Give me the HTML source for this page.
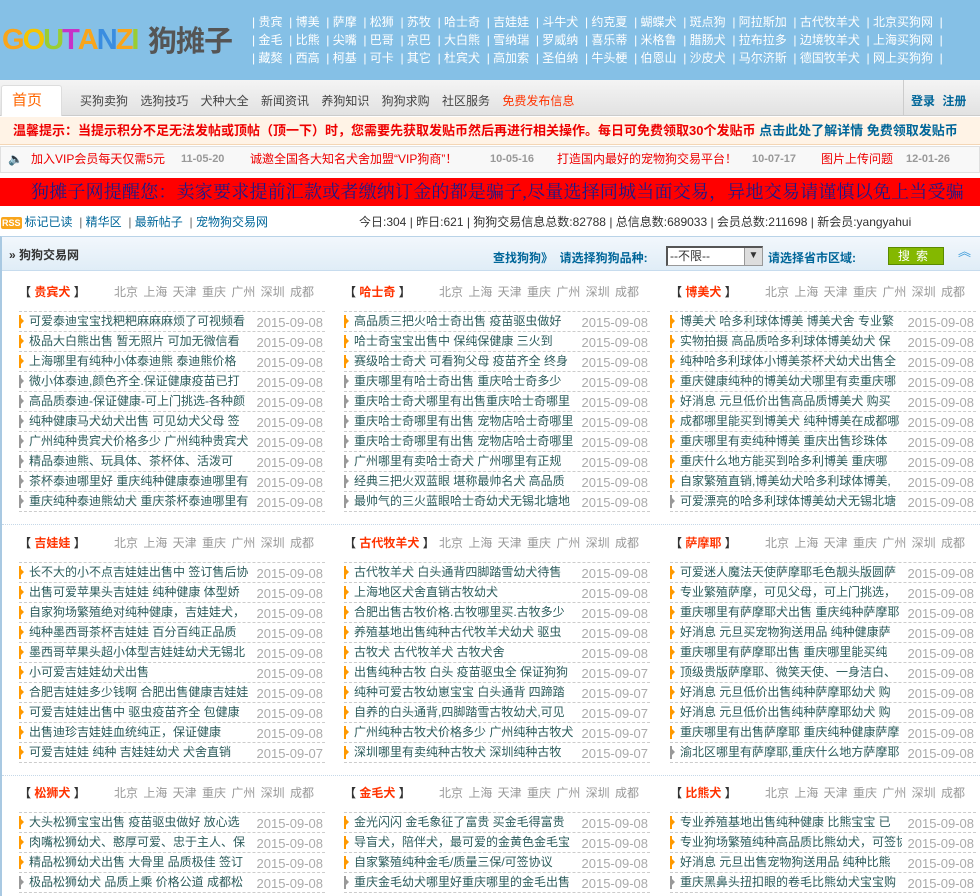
<!DOCTYPE html>
<html><head><meta charset="utf-8">
<style>
*{margin:0;padding:0;box-sizing:border-box}
body{width:980px;height:891px;overflow:hidden;background:#fff;font-family:"Liberation Sans","Noto Sans CJK SC",sans-serif;font-size:12px;color:#333;position:relative}
.abs{position:absolute}
#hd{left:0;top:0;width:980px;height:80px;background:#85c0e6}
.logo{left:2px;top:24px;font-family:"Liberation Sans",sans-serif;font-weight:bold;font-size:29px;letter-spacing:-2px;line-height:32px}
.logo span{display:inline-block}
.logocn{left:148px;top:22px;font-size:29px;color:#555;line-height:34px;font-family:"Noto Sans CJK SC",sans-serif;font-weight:bold;letter-spacing:-1px}
.tl{font-size:12px;color:#fff;line-height:18px;white-space:nowrap}
#nav{left:0;top:80px;width:980px;height:36px;background:linear-gradient(#f4f4f4,#e2e2e2);border-bottom:1px solid #ccc}
.home{left:1px;top:85px;width:61px;height:31px;background:#fff;border:1px solid #ddd;border-bottom:none;border-radius:3px 3px 0 0;color:#f60;font-size:15px;line-height:29px;padding-left:10px}
.nv{top:92px;font-size:12px;color:#444}
#tip{left:0;top:117px;width:980px;height:28px;background:#fff3e6;border-bottom:1px solid #f4d6b5;font-weight:bold;font-size:13px;line-height:28px;padding-left:13px;color:#e00;white-space:nowrap;overflow:hidden}
#ntc{left:0;top:146px;width:980px;height:27px;background:#f8f8f8;border:1px solid #e0e0e0;font-size:12px;line-height:25px;white-space:nowrap}
#ntc .r{color:#e00;position:absolute}
#ntc .d{color:#999;position:absolute;font-size:11px;font-weight:bold}
#warn{left:0;top:178px;width:980px;height:28px;background:#ff0000;color:#1a1a8a;font-family:"Liberation Serif","Noto Serif CJK SC",serif;font-size:18px;line-height:28px;padding-left:31px;white-space:nowrap;overflow:hidden;letter-spacing:0.2px}
#st{left:0;top:210px;width:980px;height:24px;font-size:12px;line-height:24px;white-space:nowrap}
#box{left:0;top:236px;width:980px;height:660px;border-left:2px solid #a9c9e2;border-top:1px solid #b9d3e8}
#bh{left:2px;top:237px;width:978px;height:34px;background:linear-gradient(#f2f7fc,#e0edf7);border-bottom:1px solid #c7dcee}
.col{position:absolute;width:306px}
.ttl{height:20px;line-height:20px;font-size:12px;position:relative;white-space:nowrap}
.ttl b{color:#333}
.ttl .n{color:#f30;font-weight:bold}
.ttl .c{position:absolute;left:95px;top:0;color:#999;word-spacing:2px}
ul{list-style:none;border-top:1px dashed #ccc;margin-top:9px}
li{height:20px;line-height:19px;border-bottom:1px dashed #ccc;position:relative;padding-left:10px;white-space:nowrap;overflow:hidden;color:#2d5d5d}
li:before{content:"";position:absolute;left:0;top:3px;width:2px;height:13px;background:#999}
li:after{content:"";position:absolute;left:2px;top:6px;border-left:3px solid #999;border-top:3px solid transparent;border-bottom:3px solid transparent}
li.o:before{background:#f90}li.o:after{border-left-color:#f90}
li i{font-style:normal;display:inline-block;width:222px;overflow:hidden;vertical-align:top}
li em{font-style:normal;position:absolute;right:2px;top:1px;color:#aaa;font-size:13px}
.sep{position:absolute;left:2px;width:978px;border-top:1px dotted #c5d8e8}
</style></head><body>
<div id="hd" class="abs"></div>
<div class="abs logo"><span style="color:#f9a51b">G</span><span style="color:#f5c400">O</span><span style="color:#9acd32">U</span><span style="color:#c832c8">T</span><span style="color:#f9a51b">A</span><span style="color:#3a8de0">N</span><span style="color:#f9a51b">Z</span><span style="color:#9acd32">I</span></div>
<div class="abs logocn">狗摊子</div>
<div class="abs tl" style="left:252px;top:13px">| 贵宾&nbsp; | 博美&nbsp; | 萨摩&nbsp; | 松狮&nbsp; | 苏牧&nbsp; | 哈士奇&nbsp; | 吉娃娃&nbsp; | 斗牛犬&nbsp; | 约克夏&nbsp; | 蝴蝶犬&nbsp; | 斑点狗&nbsp; | 阿拉斯加&nbsp; | 古代牧羊犬&nbsp; | 北京买狗网&nbsp; |</div>
<div class="abs tl" style="left:252px;top:31px">| 金毛&nbsp; | 比熊&nbsp; | 尖嘴&nbsp; | 巴哥&nbsp; | 京巴&nbsp; | 大白熊&nbsp; | 雪纳瑞&nbsp; | 罗威纳&nbsp; | 喜乐蒂&nbsp; | 米格鲁&nbsp; | 腊肠犬&nbsp; | 拉布拉多&nbsp; | 边境牧羊犬&nbsp; | 上海买狗网&nbsp; |</div>
<div class="abs tl" style="left:252px;top:49px">| 藏獒&nbsp; | 西高&nbsp; | 柯基&nbsp; | 可卡&nbsp; | 其它&nbsp; | 杜宾犬&nbsp; | 高加索&nbsp; | 圣伯纳&nbsp; | 牛头梗&nbsp; | 伯恩山&nbsp; | 沙皮犬&nbsp; | 马尔济斯&nbsp; | 德国牧羊犬&nbsp; | 网上买狗狗&nbsp; |</div>
<div id="nav" class="abs"></div>
<div class="abs home">首页</div>
<div class="abs nv" style="left:80px;word-spacing:9px">买狗卖狗 选狗技巧 犬种大全 新闻资讯 养狗知识 狗狗求购 社区服务 <span style="color:#f30">免费发布信息</span></div>
<div class="abs" style="left:903px;top:80px;width:1px;height:36px;background:#ccc"></div>
<div class="abs nv" style="left:911px;color:#069;font-weight:bold;word-spacing:4px">登录 注册</div>
<div id="tip" class="abs">温馨提示：当提示积分不足无法发帖或顶帖（顶一下）时，您需要先获取发贴币然后再进行相关操作。每日可免费领取30个发贴币 <span style="color:#069">点击此处了解详情 免费领取发贴币</span></div>
<div id="ntc" class="abs">
<span class="abs" style="left:7px;top:0;color:#6a3">🔈</span>
<span class="r" style="left:30px">加入VIP会员每天仅需5元</span><span class="d" style="left:180px">11-05-20</span>
<span class="r" style="left:249px">诚邀全国各大知名犬舍加盟“VIP狗商”！</span><span class="d" style="left:489px">10-05-16</span>
<span class="r" style="left:556px">打造国内最好的宠物狗交易平台！</span><span class="d" style="left:751px">10-07-17</span>
<span class="r" style="left:820px">图片上传问题</span><span class="d" style="left:905px">12-01-26</span>
</div>
<div id="warn" class="abs">狗摊子网提醒您：卖家要求提前汇款或者缴纳订金的都是骗子,尽量选择同城当面交易，异地交易请谨慎以免上当受骗</div>
<div id="st" class="abs"><span style="display:inline-block;background:#f9a51b;color:#fff;font-size:9px;font-weight:bold;line-height:12px;padding:0 1px;margin:0 3px 0 1px;border-radius:2px">RSS</span><span style="color:#069">标记已读 </span><span style="color:#666">&nbsp;|&nbsp;</span><span style="color:#069">精华区 </span><span style="color:#666">&nbsp;|&nbsp;</span><span style="color:#069">最新帖子 </span><span style="color:#666">&nbsp;|&nbsp;</span><span style="color:#069">宠物狗交易网</span>
<span class="abs" style="left:359px;top:0;color:#333">今日:304 | 昨日:621 | 狗狗交易信息总数:82788 | 总信息数:689033 | 会员总数:211698 | 新会员:yangyahui</span></div>
<div id="box" class="abs"></div>
<div id="bh" class="abs"></div>
<div class="abs" style="left:9px;top:246px;font-weight:bold;font-size:12px;color:#333">» 狗狗交易网</div>
<div class="abs" style="left:493px;top:249px;font-weight:bold;color:#069">查找狗狗》 &nbsp;请选择狗狗品种:</div>
<div class="abs" style="left:666px;top:246px;width:97px;height:20px;border:2px solid #555;border-right:1px solid #999;border-bottom:1px solid #999;background:#fff;font-size:12px;line-height:16px;padding-left:2px">--不限--<span class="abs" style="right:0;top:0;width:18px;height:17px;background:#ddd;border-left:1px solid #999;text-align:center;font-size:10px">▼</span></div>
<div class="abs" style="left:768px;top:249px;font-weight:bold;color:#069">请选择省市区域:</div>
<div class="abs" style="left:888px;top:247px;width:56px;height:18px;background:#84b800;border:1px solid #5a8a00;color:#fff;text-align:center;line-height:16px;letter-spacing:6px;font-size:12px">搜索</div>
<div class="abs" style="left:958px;top:241px;color:#3a9ad9;font-size:13px">︽</div>

<div class="sep" style="top:524px"></div>
<div class="sep" style="top:775px"></div>

<!-- block 1 -->
<div class="col" style="left:19px;top:282px">
<div class="ttl"><b>【</b> <span class="n">贵宾犬</span> <b>】</b><span class="c">北京 上海 天津 重庆 广州 深圳 成都</span></div>
<ul>
<li class="o"><i>可爱泰迪宝宝找粑粑麻麻麻烦了可视频看</i><em>2015-09-08</em></li>
<li class="o"><i>极品大白熊出售 暂无照片 可加无微信看</i><em>2015-09-08</em></li>
<li class="o"><i>上海哪里有纯种小体泰迪熊 泰迪熊价格</i><em>2015-09-08</em></li>
<li><i>微小体泰迪,颜色齐全.保证健康疫苗已打</i><em>2015-09-08</em></li>
<li><i>高品质泰迪-保证健康-可上门挑选-各种颜</i><em>2015-09-08</em></li>
<li><i>纯种健康马犬幼犬出售 可见幼犬父母 签</i><em>2015-09-08</em></li>
<li><i>广州纯种贵宾犬价格多少 广州纯种贵宾犬</i><em>2015-09-08</em></li>
<li><i>精品泰迪熊、玩具体、茶杯体、活泼可</i><em>2015-09-08</em></li>
<li><i>茶杯泰迪哪里好 重庆纯种健康泰迪哪里有</i><em>2015-09-08</em></li>
<li><i>重庆纯种泰迪熊幼犬 重庆茶杯泰迪哪里有</i><em>2015-09-08</em></li>
</ul></div>
<div class="col" style="left:344px;top:282px">
<div class="ttl"><b>【</b> <span class="n">哈士奇</span> <b>】</b><span class="c">北京 上海 天津 重庆 广州 深圳 成都</span></div>
<ul>
<li class="o"><i>高品质三把火哈士奇出售 疫苗驱虫做好</i><em>2015-09-08</em></li>
<li class="o"><i>哈士奇宝宝出售中 保纯保健康 三火到</i><em>2015-09-08</em></li>
<li class="o"><i>赛级哈士奇犬 可看狗父母 疫苗齐全 终身</i><em>2015-09-08</em></li>
<li><i>重庆哪里有哈士奇出售 重庆哈士奇多少</i><em>2015-09-08</em></li>
<li><i>重庆哈士奇犬哪里有出售重庆哈士奇哪里</i><em>2015-09-08</em></li>
<li><i>重庆哈士奇哪里有出售 宠物店哈士奇哪里</i><em>2015-09-08</em></li>
<li><i>重庆哈士奇哪里有出售 宠物店哈士奇哪里</i><em>2015-09-08</em></li>
<li><i>广州哪里有卖哈士奇犬 广州哪里有正规</i><em>2015-09-08</em></li>
<li><i>经典三把火双蓝眼 堪称最帅名犬 高品质</i><em>2015-09-08</em></li>
<li><i>最帅气的三火蓝眼哈士奇幼犬无锡北塘地</i><em>2015-09-08</em></li>
</ul></div>
<div class="col" style="left:670px;top:282px">
<div class="ttl"><b>【</b> <span class="n">博美犬</span> <b>】</b><span class="c">北京 上海 天津 重庆 广州 深圳 成都</span></div>
<ul>
<li class="o"><i>博美犬 哈多利球体博美 博美犬舍 专业繁</i><em>2015-09-08</em></li>
<li class="o"><i>实物拍摄 高品质哈多利球体博美幼犬 保</i><em>2015-09-08</em></li>
<li class="o"><i>纯种哈多利球体小博美茶杯犬幼犬出售全</i><em>2015-09-08</em></li>
<li class="o"><i>重庆健康纯种的博美幼犬哪里有卖重庆哪</i><em>2015-09-08</em></li>
<li class="o"><i>好消息 元旦低价出售高品质博美犬 购买</i><em>2015-09-08</em></li>
<li class="o"><i>成都哪里能买到博美犬 纯种博美在成都哪</i><em>2015-09-08</em></li>
<li class="o"><i>重庆哪里有卖纯种博美 重庆出售珍珠体</i><em>2015-09-08</em></li>
<li class="o"><i>重庆什么地方能买到哈多利博美 重庆哪</i><em>2015-09-08</em></li>
<li class="o"><i>自家繁殖直销,博美幼犬哈多利球体博美,</i><em>2015-09-08</em></li>
<li><i>可爱漂亮的哈多利球体博美幼犬无锡北塘</i><em>2015-09-08</em></li>
</ul></div>

<!-- block 2 -->
<div class="col" style="left:19px;top:533px">
<div class="ttl"><b>【</b> <span class="n">吉娃娃</span> <b>】</b><span class="c">北京 上海 天津 重庆 广州 深圳 成都</span></div>
<ul>
<li class="o"><i>长不大的小不点吉娃娃出售中 签订售后协</i><em>2015-09-08</em></li>
<li class="o"><i>出售可爱苹果头吉娃娃 纯种健康 体型娇</i><em>2015-09-08</em></li>
<li class="o"><i>自家狗场繁殖绝对纯种健康，吉娃娃犬，</i><em>2015-09-08</em></li>
<li class="o"><i>纯种墨西哥茶杯吉娃娃 百分百纯正品质</i><em>2015-09-08</em></li>
<li class="o"><i>墨西哥苹果头超小体型吉娃娃幼犬无锡北</i><em>2015-09-08</em></li>
<li class="o"><i>小可爱吉娃娃幼犬出售</i><em>2015-09-08</em></li>
<li class="o"><i>合肥吉娃娃多少钱啊 合肥出售健康吉娃娃</i><em>2015-09-08</em></li>
<li class="o"><i>可爱吉娃娃出售中 驱虫疫苗齐全 包健康</i><em>2015-09-08</em></li>
<li class="o"><i>出售迪珍吉娃娃血统纯正，保证健康</i><em>2015-09-08</em></li>
<li class="o"><i>可爱吉娃娃 纯种 吉娃娃幼犬 犬舍直销</i><em>2015-09-07</em></li>
</ul></div>
<div class="col" style="left:344px;top:533px">
<div class="ttl"><b>【</b> <span class="n">古代牧羊犬</span> <b>】</b><span class="c">北京 上海 天津 重庆 广州 深圳 成都</span></div>
<ul>
<li class="o"><i>古代牧羊犬 白头通背四脚踏雪幼犬待售</i><em>2015-09-08</em></li>
<li class="o"><i>上海地区犬舍直销古牧幼犬</i><em>2015-09-08</em></li>
<li class="o"><i>合肥出售古牧价格.古牧哪里买.古牧多少</i><em>2015-09-08</em></li>
<li class="o"><i>养殖基地出售纯种古代牧羊犬幼犬 驱虫</i><em>2015-09-08</em></li>
<li class="o"><i>古牧犬 古代牧羊犬 古牧犬舍</i><em>2015-09-08</em></li>
<li class="o"><i>出售纯种古牧 白头 疫苗驱虫全 保证狗狗</i><em>2015-09-07</em></li>
<li class="o"><i>纯种可爱古牧幼崽宝宝 白头通背 四蹄踏</i><em>2015-09-07</em></li>
<li class="o"><i>自养的白头通背,四脚踏雪古牧幼犬,可见</i><em>2015-09-07</em></li>
<li class="o"><i>广州纯种古牧犬价格多少 广州纯种古牧犬</i><em>2015-09-07</em></li>
<li class="o"><i>深圳哪里有卖纯种古牧犬 深圳纯种古牧</i><em>2015-09-07</em></li>
</ul></div>
<div class="col" style="left:670px;top:533px">
<div class="ttl"><b>【</b> <span class="n">萨摩耶</span> <b>】</b><span class="c">北京 上海 天津 重庆 广州 深圳 成都</span></div>
<ul>
<li class="o"><i>可爱迷人魔法天使萨摩耶毛色靓头版圆萨</i><em>2015-09-08</em></li>
<li class="o"><i>专业繁殖萨摩，可见父母，可上门挑选，</i><em>2015-09-08</em></li>
<li class="o"><i>重庆哪里有萨摩耶犬出售 重庆纯种萨摩耶</i><em>2015-09-08</em></li>
<li class="o"><i>好消息 元旦买宠物狗送用品 纯种健康萨</i><em>2015-09-08</em></li>
<li class="o"><i>重庆哪里有萨摩耶出售 重庆哪里能买纯</i><em>2015-09-08</em></li>
<li class="o"><i>顶级贵版萨摩耶、微笑天使、一身洁白、</i><em>2015-09-08</em></li>
<li class="o"><i>好消息 元旦低价出售纯种萨摩耶幼犬 购</i><em>2015-09-08</em></li>
<li class="o"><i>好消息 元旦低价出售纯种萨摩耶幼犬 购</i><em>2015-09-08</em></li>
<li class="o"><i>重庆哪里有出售萨摩耶 重庆纯种健康萨摩</i><em>2015-09-08</em></li>
<li><i>渝北区哪里有萨摩耶,重庆什么地方萨摩耶</i><em>2015-09-08</em></li>
</ul></div>

<!-- block 3 -->
<div class="col" style="left:19px;top:783px">
<div class="ttl"><b>【</b> <span class="n">松狮犬</span> <b>】</b><span class="c">北京 上海 天津 重庆 广州 深圳 成都</span></div>
<ul>
<li class="o"><i>大头松狮宝宝出售 疫苗驱虫做好 放心选</i><em>2015-09-08</em></li>
<li class="o"><i>肉嘴松狮幼犬、憨厚可爱、忠于主人、保</i><em>2015-09-08</em></li>
<li class="o"><i>精品松狮幼犬出售 大骨里 品质极佳 签订</i><em>2015-09-08</em></li>
<li><i>极品松狮幼犬 品质上乘 价格公道 成都松</i><em>2015-09-08</em></li>
</ul></div>
<div class="col" style="left:344px;top:783px">
<div class="ttl"><b>【</b> <span class="n">金毛犬</span> <b>】</b><span class="c">北京 上海 天津 重庆 广州 深圳 成都</span></div>
<ul>
<li class="o"><i>金光闪闪 金毛象征了富贵 买金毛得富贵</i><em>2015-09-08</em></li>
<li class="o"><i>导盲犬，陪伴犬，最可爱的金黄色金毛宝</i><em>2015-09-08</em></li>
<li class="o"><i>自家繁殖纯种金毛/质量三保/可签协议</i><em>2015-09-08</em></li>
<li><i>重庆金毛幼犬哪里好重庆哪里的金毛出售</i><em>2015-09-08</em></li>
</ul></div>
<div class="col" style="left:670px;top:783px">
<div class="ttl"><b>【</b> <span class="n">比熊犬</span> <b>】</b><span class="c">北京 上海 天津 重庆 广州 深圳 成都</span></div>
<ul>
<li class="o"><i>专业养殖基地出售纯种健康 比熊宝宝 已</i><em>2015-09-08</em></li>
<li class="o"><i>专业狗场繁殖纯种高品质比熊幼犬，可签协</i><em>2015-09-08</em></li>
<li class="o"><i>好消息 元旦出售宠物狗送用品 纯种比熊</i><em>2015-09-08</em></li>
<li><i>重庆黑鼻头扭扣眼的卷毛比熊幼犬宝宝购</i><em>2015-09-08</em></li>
</ul></div>
</body></html>
